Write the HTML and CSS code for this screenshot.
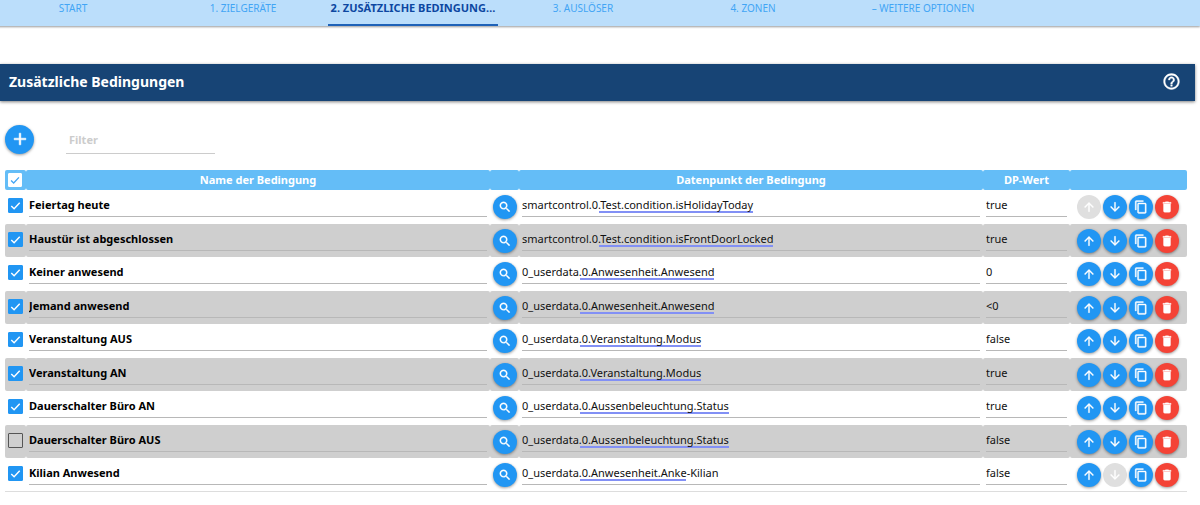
FILE: index.html
```
<!DOCTYPE html>
<html lang="de">
<head>
<meta charset="utf-8">
<title>Zusätzliche Bedingungen</title>
<link rel="stylesheet" href="styles.css">
<script src="app.js" defer></script>
</head>
<body>
<svg class="sprite" aria-hidden="true">
  <symbol id="i-up" viewBox="0 0 24 24"><path d="M4 12l1.41 1.41L11 7.83V20h2V7.83l5.58 5.59L20 12l-8-8-8 8z"/></symbol>
  <symbol id="i-down" viewBox="0 0 24 24"><path d="M20 12l-1.41-1.41L13 16.17V4h-2v12.17l-5.58-5.59L4 12l8 8 8-8z"/></symbol>
  <symbol id="i-copy" viewBox="0 0 24 24"><path d="M16 1H4c-1.1 0-2 .9-2 2v14h2V3h12V1zm3 4H8c-1.1 0-2 .9-2 2v14c0 1.1.9 2 2 2h11c1.1 0 2-.9 2-2V7c0-1.1-.9-2-2-2zm0 16H8V7h11v14z"/></symbol>
  <symbol id="i-delete" viewBox="0 0 24 24"><path d="M6 19c0 1.1.9 2 2 2h8c1.1 0 2-.9 2-2V7H6v12zM19 4h-3.5l-1-1h-5l-1 1H5v2h14V4z"/></symbol>
  <symbol id="i-search" viewBox="0 0 24 24"><path d="M15.5 14h-.79l-.28-.27C15.41 12.59 16 11.11 16 9.5 16 5.91 13.09 3 9.5 3S3 5.91 3 9.5 5.91 16 9.5 16c1.61 0 3.09-.59 4.23-1.57l.27.28v.79l5 4.99L20.49 19l-4.99-5zm-6 0C7.01 14 5 11.99 5 9.5S7.01 5 9.5 5 14 7.01 14 9.5 11.99 14 9.5 14z"/></symbol>
  <symbol id="i-add" viewBox="0 0 24 24"><path d="M19 13h-6v6h-2v-6H5v-2h6V5h2v6h6v2z"/></symbol>
  <symbol id="i-help" viewBox="0 0 24 24"><path d="M11 18h2v-2h-2v2zm1-16C6.480 2 2 6.480 2 12s4.480 10 10 10 10-4.480 10-10S17.520 2 12 2zm0 18c-4.410 0-8-3.590-8-8s3.590-8 8-8 8 3.590 8 8-3.590 8-8 8zm0-14c-2.210 0-4 1.790-4 4h2c0-1.100.900-2 2-2s2 .900 2 2c0 2-3 1.750-3 5h2c0-2.250 3-2.500 3-5 0-2.210-1.790-4-4-4z"/></symbol>
  <symbol id="i-check" viewBox="0 0 16 16"><path d="M3.500 8.500L6.500 11.500L12.500 5" fill="none" stroke="currentColor" stroke-width="1.500"/></symbol>
</svg>
<nav class="tabs">
  <a class="tab" href="#start">START</a>
  <a class="tab" href="#ziel">1. ZIELGERÄTE</a>
  <a class="tab tab-active" href="#bedingungen" aria-current="page">2. ZUSÄTZLICHE BEDINGUNG…</a>
  <a class="tab" href="#ausloeser">3. AUSLÖSER</a>
  <a class="tab" href="#zonen">4. ZONEN</a>
  <a class="tab" href="#optionen">– WEITERE OPTIONEN</a>
</nav>
<main>
  <header class="title-bar">
    <h1>Zusätzliche Bedingungen</h1>
    <button class="help" aria-label="Hilfe"><svg><use href="#i-help"/></svg></button>
  </header>
  <div class="toolbar">
    <button class="round round-large" aria-label="Hinzufügen"><svg><use href="#i-add"/></svg></button>
    <input class="filter" type="text" placeholder="Filter" aria-label="Filter">
  </div>
  <table class="conditions">
    <colgroup><col class="c-check"><col><col class="c-search"><col><col class="c-value"><col class="c-actions"></colgroup>
    <thead>
      <tr>
        <th><label class="check check-all"><input type="checkbox" checked aria-label="Alle auswählen"><svg><use href="#i-check"/></svg></label></th>
        <th>Name der Bedingung</th><th></th><th>Datenpunkt der Bedingung</th><th>DP-Wert</th><th></th>
      </tr>
    </thead>
    <tbody id="rows"></tbody>
  </table>
</main>
</body>
</html>
```
FILE: styles.css
```
* { box-sizing: border-box; }
body { margin: 0; background: #fff; color: #111; font-family: "Noto Sans", "Open Sans", sans-serif; font-size: 11px; }
button, input { font: inherit; }
button { border: 0; padding: 0; cursor: pointer; }
svg { display: block; fill: currentColor; }
.sprite { display: none; }
.tabs { display: grid; grid-template-columns: repeat(6, 170px); height: 26px; margin-left: -12px; background: #bbdefb; box-shadow: 0 1px 2px rgba(0, 0, 0, .4); }
.tab { height: 26px; line-height: 16px; text-align: center; text-decoration: none; white-space: nowrap; color: #42a5f5; font-size: 10px; }
.tab-active { color: #0d47a1; font-size: 11px; font-weight: 700; border-bottom: 2px solid #1e62b8; }
.title-bar { display: flex; align-items: center; justify-content: space-between; height: 37px; margin: 38px 5px 0 0; padding: 0 14px 2px 9px; background: #174475; color: #fff; box-shadow: 0 1px 3px rgba(0, 0, 0, .5); }
.title-bar h1 { margin: 0; font-size: 14px; font-weight: 700; }
.help { background: none; color: #fff; }
.help svg { width: 19px; height: 19px; stroke: currentColor; stroke-width: 0.5; }
.toolbar { display: flex; align-items: center; gap: 32px; padding: 23px 5px 16px; }
.round { display: flex; flex: none; align-items: center; justify-content: center; width: 24px; height: 24px; border-radius: 50%; background: #2196f3; color: #fff; box-shadow: 0 1px 3px rgba(0, 0, 0, .4); }
.round svg { width: 14px; height: 14px; stroke: currentColor; stroke-width: 0.6; }
.round-large { width: 29px; height: 29px; }
.round-large svg { width: 20px; height: 20px; }
.round-delete { background: #f44336; }
.round:disabled { background: #dfdfdf; box-shadow: none; }
.filter { width: 149px; height: 30px; padding: 2px 3px 0; border: 0; border-bottom: 1px solid #ccc; background: none; outline: 0; font-weight: 700; }
.filter::placeholder { color: #ccc; opacity: 1; }
.conditions { width: calc(100% - 18px); margin: 0 13px 0 5px; table-layout: fixed; border-collapse: separate; border-spacing: 0; }
.c-check { width: 21px; }
.c-search { width: 29px; }
.c-value { width: 87px; }
.c-actions { width: 117px; }
th { height: 20px; padding: 0 0 1px; background: #64bdf7; color: #fff; border-radius: 2px; font-weight: 700; line-height: 16px; }
td { height: 34px; padding: 0 3px; vertical-align: top; border-radius: 2px; }
tr:nth-child(even) td { height: 33px; background: #cfcfcf; }
tbody tr:last-child td { border-bottom: 1px solid #ddd; border-radius: 0; }
.field { display: block; width: 100%; height: 27px; padding: 2px 0 0; border: 0; border-bottom: 1px solid #b8b8b8; border-radius: 0; background: none; outline: 0; color: #111; }
.field-name { font-weight: 700; color: #000; }
.field-point { background: linear-gradient(#8290f5, #8290f5) no-repeat var(--mark-start) 21px / var(--mark-width) 2px; }
.check { position: relative; display: block; width: 15px; height: 15px; margin-top: 8px; color: #fff; }
.check input { appearance: none; display: block; width: 15px; height: 15px; margin: 0; border: 1px solid #555; border-radius: 1px; }
.check input:checked { border-color: #2196f3; background: #2196f3; }
.check svg { position: absolute; inset: 0; width: 15px; height: 15px; pointer-events: none; }
.check input:not(:checked) + svg { display: none; }
.check-all { margin: 0 3px; width: 14px; height: 14px; color: #42a5f5; }
.check-all input { width: 14px; height: 14px; }
.check-all svg { width: 14px; height: 14px; }
.check-all input:checked { border-color: #fff; background: #fff; }
.search-box { padding-top: 5px; }
.actions { display: flex; gap: 2px; padding: 5px 0 0 4px; }
```
FILE: app.js
```
// name, data point, value, enabled, start and width of the spelling mark
const conditions = [
  ["Feiertag heute", "smartcontrol.0.Test.condition.isHolidayToday", "true", true, 77, 154],
  ["Haustür ist abgeschlossen", "smartcontrol.0.Test.condition.isFrontDoorLocked", "true", true, 77, 174],
  ["Keiner anwesend", "0_userdata.0.Anwesenheit.Anwesend", "0", true, 58, 134],
  ["Jemand anwesend", "0_userdata.0.Anwesenheit.Anwesend", "<0", true, 58, 134],
  ["Veranstaltung AUS", "0_userdata.0.Veranstaltung.Modus", "false", true, 58, 121],
  ["Veranstaltung AN", "0_userdata.0.Veranstaltung.Modus", "true", true, 58, 121],
  ["Dauerschalter Büro AN", "0_userdata.0.Aussenbeleuchtung.Status", "true", true, 58, 149],
  ["Dauerschalter Büro AUS", "0_userdata.0.Aussenbeleuchtung.Status", "false", false, 58, 149],
  ["Kilian Anwesend", "0_userdata.0.Anwesenheit.Anke-Kilian", "false", true, 58, 106]
];
const button = (icon, label, extra = "") =>
  `<button class="round ${icon === "delete" ? "round-delete" : ""}" aria-label="${label}" ${extra}><svg><use href="#i-${icon}"/></svg></button>`;
document.getElementById("rows").innerHTML = conditions.map(([name, point, value, on, start, width], i) => `
  <tr>
    <td><label class="check"><input type="checkbox" ${on ? "checked" : ""} aria-label="${name} aktiv"><svg><use href="#i-check"/></svg></label></td>
    <td><input class="field field-name" type="text" value="${name}" aria-label="Name der Bedingung"></td>
    <td><div class="search-box">${button("search", "Datenpunkt suchen")}</div></td>
    <td><input class="field field-point" type="text" value="${point}" aria-label="Datenpunkt" style="--mark-start:${start}px;--mark-width:${width}px"></td>
    <td><input class="field" type="text" value="${value.replace("<", "&lt;")}" aria-label="DP-Wert"></td>
    <td><div class="actions">${button("up", "Nach oben", i === 0 ? "disabled" : "")}${button("down", "Nach unten", i === conditions.length - 1 ? "disabled" : "")}${button("copy", "Kopieren")}${button("delete", "Löschen")}</div></td>
  </tr>`).join("");
```
